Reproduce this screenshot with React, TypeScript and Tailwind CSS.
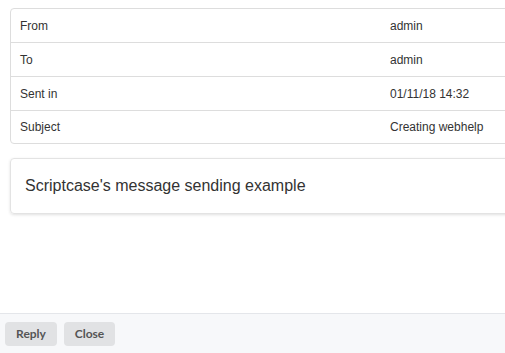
import React from "react";

const rows: [string, string][] = [
  ["From", "admin"],
  ["To", "admin"],
  ["Sent in", "01/11/18 14:32"],
  ["Subject", "Creating webhelp"],
];

const heights = ["h-[33px]", "h-[34px] border-t border-[#dddddd]", "h-[34px] border-t border-[#dddddd]", "h-[33px] border-t border-[#dddddd]"];

export default function App() {
  return (
    <div className="w-[505px] h-[353px] overflow-hidden bg-white flex flex-col relative" style={{ fontFamily: '"Liberation Sans", Arial, sans-serif' }}>
      <div className="flex-1">
        <div className="ml-[10px] mt-[8px] w-[520px] border border-[#dddddd] rounded-[4px]">
          {rows.map(([k, v], i) => (
            <div key={k} className={`flex items-center text-[12px] text-[#333333] ${heights[i]}`}>
              <div className="w-[379px] pl-[9px]">{k}</div>
              <div>{v}</div>
            </div>
          ))}
        </div>
        <div className="ml-[10px] mt-[14px] w-[520px] h-[56px] border border-[#e3e3e3] rounded-[4px] shadow-[0_1px_3px_rgba(0,0,0,0.12)] flex items-center pl-[14px] text-[16px] text-[#333333]">
          Scriptcase's message sending example
        </div>
      </div>
      <div className="h-[40px] border-t border-[#e4e6ea] bg-[#f7f8fa] flex items-center gap-[7px] pl-[5px] pt-[1px]" style={{ fontFamily: "Lato, sans-serif" }}>
        <button className="h-[24px] w-[52px] rounded-[4px] bg-[#e1e2e4] text-[12px] font-bold text-[#555555]">Reply</button>
        <button className="h-[24px] w-[51px] rounded-[4px] bg-[#e1e2e4] text-[12px] font-bold text-[#555555]">Close</button>
      </div>
    </div>
  );
}
